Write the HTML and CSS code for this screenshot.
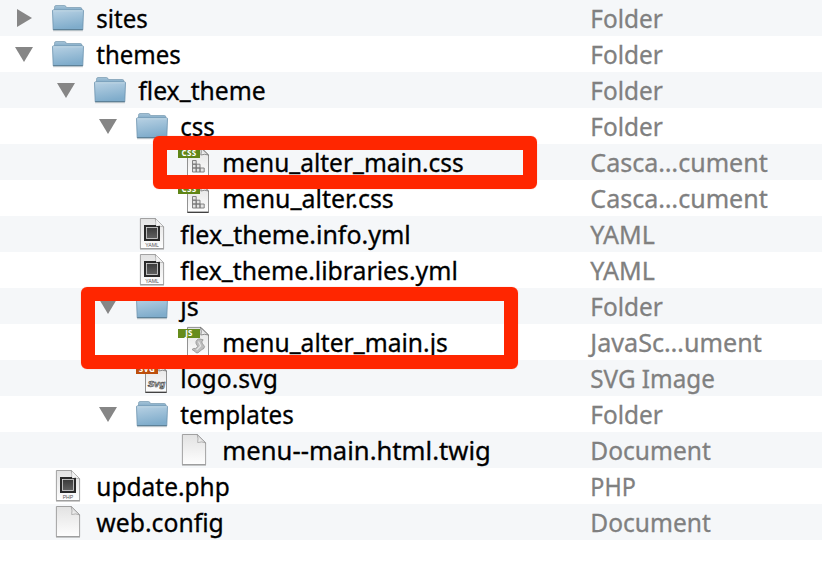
FILE: index.html
```
<!DOCTYPE html>
<html lang="en">
<head>
<meta charset="utf-8">
<title>Theme files</title>
<link rel="stylesheet" href="styles.css">
</head>
<body>
<svg class="defs" width="0" height="0" aria-hidden="true">
  <defs>
    <linearGradient id="blue" x1="0" y1="0" x2="0.25" y2="1"><stop offset="0" stop-color="#b9d2e4"/><stop offset="1" stop-color="#7faccb"/></linearGradient>
    <linearGradient id="tab" x1="0" y1="0" x2="0" y2="1"><stop offset="0" stop-color="#a5c3d8"/><stop offset="1" stop-color="#7ea9c6"/></linearGradient>
    <linearGradient id="paper" x1="0" y1="0" x2="0" y2="1"><stop offset="0" stop-color="#e2e2e2"/><stop offset="1" stop-color="#fefefe"/></linearGradient>
    <linearGradient id="fold" x1="0" y1="1" x2="1" y2="0"><stop offset="0" stop-color="#fff"/><stop offset="0.5" stop-color="#ddd"/><stop offset="1" stop-color="#777"/></linearGradient>
    <linearGradient id="dark" x1="0" y1="0" x2="0" y2="1"><stop offset="0" stop-color="#3a3a3a"/><stop offset="1" stop-color="#606060"/></linearGradient>
  </defs>
  <symbol id="folder" viewBox="0 0 32 36">
    <path d="M2.5 11V7.3Q2.5 5.5 4 5.5H12.5Q14 5.5 14.3 7.5H28.5Q29.8 7.5 29.8 9V11Z" fill="url(#tab)" stroke="#7799b0" stroke-width=".7"/>
    <path d="M.5 11Q.5 9.8 1.6 9.8H30.4Q31.5 9.8 31.5 11L30.8 29.8H1.2Z" fill="url(#blue)" stroke="#6c93ae" stroke-width=".8"/>
    <path d="M1.2 10.8H30.8" stroke="#c6dce9" stroke-width=".8"/>
    <path d="M1.2 29.7H30.8" stroke="#55798f" stroke-width="1"/>
    <path d="M1 30.8H31" stroke="#aaa" stroke-width=".7" opacity=".6"/>
  </symbol>
  <symbol id="doc" viewBox="0 0 32 36">
    <path d="M4.4 2.5H19.2L27.6 10.8V32.6H4.4Z" fill="url(#paper)" stroke="#999" stroke-width=".9"/>
    <path d="M19.2 2.5Q20.6 7 19.7 10.5Q23.5 9.2 27.6 10.8Z" fill="url(#fold)" stroke="#888" stroke-width=".6"/>
    <path d="M4 33H28" stroke="#8b8b8b" stroke-width=".8"/>
  </symbol>
  <symbol id="plate" viewBox="0 0 32 36">
    <use href="#doc"/>
    <rect x="8" y="9" width="16" height="16" fill="#292929"/>
    <rect x="10.5" y="11.5" width="11" height="11" fill="url(#dark)" stroke="#ddd" stroke-width=".8"/>
    <path d="M20 3.2Q20.8 7 20 10.3Q23.5 9.4 27 10.4Z" fill="#f3f3f3"/>
  </symbol>
  <symbol id="page" viewBox="0 0 32 36">
    <path d="M9.5 3.4H23L30.5 11V32H9.5Z" fill="url(#paper)" stroke="#777" stroke-width=".8"/>
    <path d="M22.5 3.4Q24 8 22.8 11Q26.5 9.6 30.5 11Z" fill="url(#fold)" stroke="#666" stroke-width=".7"/>
    <path d="M9.3 32.4H30.7" stroke="#333" stroke-width="1"/>
  </symbol>
  <symbol id="css" viewBox="0 0 32 36">
    <use href="#page"/>
    <path d="M14.5 16.5H18.2V20.2H14.5ZM14.5 20.2H18.2V24H14.5ZM14.5 24H18.2V28H14.5ZM18.2 20.2H22V24H18.2ZM18.2 24H22V28H18.2ZM22 24H26.2V28H22Z" fill="#e4e4e4" stroke="#777" stroke-width=".9"/>
  </symbol>
  <symbol id="js" viewBox="0 0 32 36">
    <use href="#page"/>
    <path d="M19 16Q20 14.6 22 15L25.2 15.8Q23.6 17 24 19L26.6 22.5Q26.4 25 24 25.5L20 28.8Q18 29.6 17 27.5L14 25.5Q15.5 24 17.6 24.4L19.8 22.6L18 19.5Q17.4 17.5 19 16Z" fill="#bdbdbd" stroke="#8a8a8a" stroke-width=".7"/>
    <path d="M20.5 17.5L22.6 21.8L18.6 26" fill="none" stroke="#e6e6e6" stroke-width="1.2"/>
  </symbol>
</svg>
<main class="list" id="list"></main>
<div class="mark mark-css"></div>
<div class="mark mark-js"></div>
<script src="list.js"></script>
</body>
</html>
```
FILE: styles.css
```
* { box-sizing: border-box; }
body {
  margin: 0;
  position: relative;
  width: 822px;
  height: 566px;
  overflow: hidden;
  background: #fff;
  font-family: "Noto Sans", "Open Sans", sans-serif;
  font-size: 25px;
  color: #000;
}
.defs { display: block; position: absolute; }
.row {
  display: grid;
  grid-template-columns: 590px 1fr;
  height: 36px;
  line-height: 36px;
  white-space: nowrap;
}
.row:nth-child(odd) { background: #f5f7f9; }
.name { display: flex; padding-left: calc(15px + var(--depth) * 42px); }
.arrow { width: 37px; height: 36px; flex: none; fill: #868686; }
.icon { width: 32px; height: 36px; flex: none; margin-right: 12px; }
.label { display: inline-block; height: 36px; transform-origin: 0 50%; -webkit-text-stroke: .3px currentColor; }
.low { position: relative; top: -2px; }
.kind { color: #808080; }
.tag { font: bold 8px "Open Sans", sans-serif; fill: #fff; text-anchor: middle; letter-spacing: .3px; }
.caption { font: 5.2px "Liberation Sans", sans-serif; fill: #555; text-anchor: middle; }
.script { font: italic bold 9.5px "Liberation Sans", sans-serif; fill: #ddd; stroke: #444; stroke-width: .6px; text-anchor: middle; }
.mark {
  position: absolute;
  background: none;
  border-radius: 6px;
  border: 14px solid #ff2600;
  box-shadow: 0 0 1px rgba(255, 38, 0, .5);
}
.mark-css { left: 153px; top: 136px; width: 384px; height: 53px; }
.mark-js { left: 81px; top: 287px; width: 437px; height: 82px; }
```
FILE: list.js
```
// name, depth, arrow, icon, kind, name width, kind width
const rows = [
  ["sites", 0, "right", "folder", "Folder", 51, 72],
  ["themes", 0, "down", "folder", "Folder", 84, 72],
  ["flex_theme", 1, "down", "folder", "Folder", 127, 72],
  ["css", 2, "down", "folder", "Folder", 34, 72],
  ["menu_alter_main.css", 3, "", "css", "Casca…cument", 241, 177],
  ["menu_alter.css", 3, "", "css", "Casca…cument", 171, 177],
  ["flex_theme.info.yml", 2, "", "yaml", "YAML", 230, 64],
  ["flex_theme.libraries.yml", 2, "", "yaml", "YAML", 277, 64],
  ["js", 2, "down", "folder", "Folder", 18, 72],
  ["menu_alter_main.js", 3, "", "js", "JavaSc…ument", 225, 171],
  ["logo.svg", 2, "", "svg", "SVG Image", 97, 124],
  ["templates", 2, "down", "folder", "Folder", 113, 72],
  ["menu--main.html.twig", 3, "", "doc", "Document", 268, 120],
  ["update.php", 0, "", "php", "PHP", 133, 45],
  ["web.config", 0, "", "doc", "Document", 127, 120]
];

const arrows = { right: "M2 9L17 18L2 27Z", down: "M0 11H18L9 26Z", "": "" };
const tag = (text, color) =>
  `<rect x="0" y="5" width="22" height="9" fill="${color}"/><text class="tag" x="11" y="12.3">${text}</text>`;
const icons = {
  folder: '<use href="#folder"/>',
  doc: '<use href="#doc"/>',
  css: '<use href="#css"/>' + tag("CSS", "#5f8516"),
  js: '<use href="#js"/>' + tag("JS", "#668c1c"),
  svg: '<use href="#page"/>' + tag("SVG", "#bd4f0c") + '<text class="script" x="20.5" y="26.5">Svg</text>',
  yaml: '<use href="#plate"/><text class="caption" x="16" y="30.5">YAML</text>',
  php: '<use href="#plate"/><text class="caption" x="16" y="30.5">PHP</text>'
};

document.getElementById("list").innerHTML = rows.map(([name, depth, arrow, icon, kind, nw, kw]) => `
  <div class="row">
    <div class="name" style="--depth:${depth}">
      <svg class="arrow" viewBox="0 0 37 36"><path d="${arrows[arrow]}"/></svg>
      <svg class="icon" viewBox="0 0 32 36">${icons[icon]}</svg>
      <span class="label" data-w="${nw}">${name.replace(/_/g, '<span class="low">_</span>')}</span>
    </div>
    <div class="kind"><span class="label" data-w="${kw}">${kind}</span></div>
  </div>`).join("");

for (const el of document.querySelectorAll(".label")) {
  const scale = (Number(el.dataset.w) + 0.5) / el.getBoundingClientRect().width;
  el.style.transform = `translateX(0.3px) scaleX(${scale})`;
}
```
